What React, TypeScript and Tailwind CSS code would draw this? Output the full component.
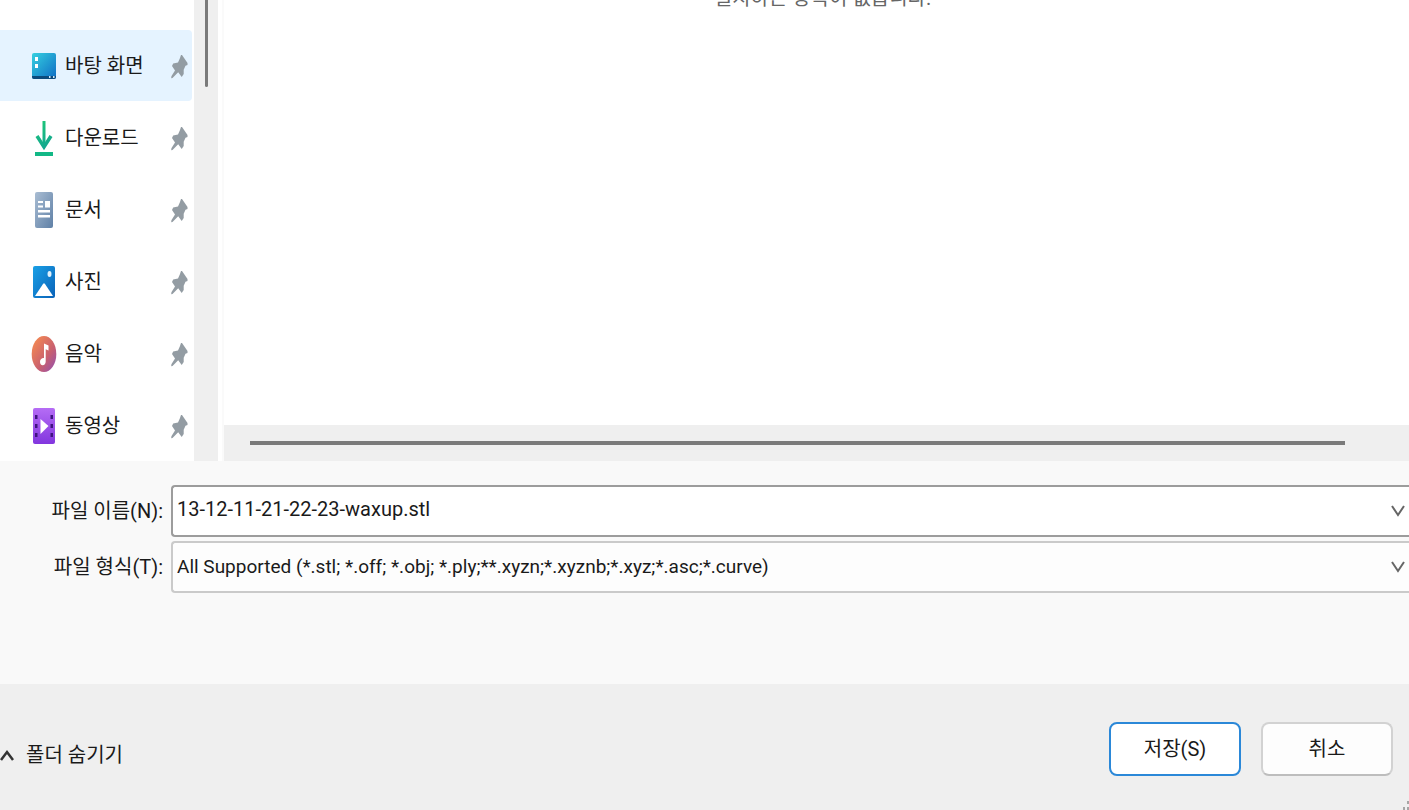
import { useState } from "react";
import type { ReactNode } from "react";

const DesktopIcon = () => (
  <svg width="26" height="36" viewBox="0 0 26 36" aria-hidden="true">
    <defs>
      <linearGradient id="desktop" x1="0" y1="0" x2="1" y2="1">
        <stop offset="0" stopColor="#35d0e0" />
        <stop offset="1" stopColor="#0f6cc4" />
      </linearGradient>
    </defs>
    <rect x="1" y="5" width="24" height="26" rx="2" fill="url(#desktop)" />
    <path d="M1 28h24v1a2 2 0 0 1-2 2H3a2 2 0 0 1-2-2z" fill="#0c4a7c" />
    <path d="M4 9h3v4H4zM4 16h3v4H4z" fill="#fff" />
    <path d="M18 28h1.500v2H18zM22 28h1.500v2H22z" fill="#cfe8fa" />
  </svg>
);

const DownloadIcon = () => (
  <svg width="26" height="36" viewBox="0 0 26 36" fill="none" aria-hidden="true">
    <defs>
      <linearGradient id="download" gradientUnits="userSpaceOnUse" x1="4" y1="2" x2="22" y2="34">
        <stop offset="0" stopColor="#1fc877" />
        <stop offset="1" stopColor="#0e9c98" />
      </linearGradient>
    </defs>
    <path d="M13 1v26" stroke="url(#download)" strokeWidth="3" />
    <path d="M6 16l7 11 7-11" stroke="url(#download)" strokeWidth="3.500" />
    <rect x="4" y="32" width="18" height="4" fill="#12b886" />
  </svg>
);

const DocumentIcon = () => (
  <svg width="26" height="36" viewBox="0 0 26 36" aria-hidden="true">
    <defs>
      <linearGradient id="document" x1="0" y1="0" x2="1" y2="1">
        <stop offset="0" stopColor="#a9bdd3" />
        <stop offset="1" stopColor="#5f80a6" />
      </linearGradient>
    </defs>
    <rect x="4" y="0" width="18" height="36" rx="2" fill="url(#document)" />
    <path d="M7 9h5v2H7zM7 13.500h5v2H7zM14 9h5v6.500h-5zM7 18h12v2.500H7zM7 23h12v2.500H7z" fill="#fff" />
  </svg>
);

const PictureIcon = () => (
  <svg width="26" height="36" viewBox="0 0 26 36" aria-hidden="true">
    <defs>
      <linearGradient id="picture" x1="0" y1="0" x2="1" y2="1">
        <stop offset="0" stopColor="#1aa0e6" />
        <stop offset="1" stopColor="#0a62b8" />
      </linearGradient>
    </defs>
    <rect x="2" y="2" width="22" height="32" rx="2" fill="url(#picture)" />
    <path d="M4 32l8-12q1-1.500 2 0l8 12z" fill="#fff" />
    <ellipse cx="18.500" cy="10" rx="2" ry="3" fill="#dff1fc" />
  </svg>
);

const MusicIcon = () => (
  <svg width="26" height="36" viewBox="0 0 26 36" aria-hidden="true">
    <defs>
      <linearGradient id="music" x1="0" y1="0" x2="1" y2="1">
        <stop offset="0.150" stopColor="#ef8455" />
        <stop offset="0.600" stopColor="#c9606f" />
        <stop offset="1" stopColor="#8f4fb5" />
      </linearGradient>
    </defs>
    <ellipse cx="13" cy="18" rx="12.300" ry="18" fill="url(#music)" />
    <path d="M13 7.500l4.500 2v5l-2.800-1.200v12.200c0 2.200-1.300 3.800-3 3.800s-2.700-1.400-2.700-3.500 1.500-4 4-3.800z" fill="#fff" />
  </svg>
);

const VideoIcon = () => (
  <svg width="26" height="36" viewBox="0 0 26 36" aria-hidden="true">
    <defs>
      <linearGradient id="video" x1="0" y1="0" x2="0" y2="1">
        <stop offset="0" stopColor="#b56cf5" />
        <stop offset="1" stopColor="#8236de" />
      </linearGradient>
    </defs>
    <rect x="2" y="0" width="22" height="36" rx="2" fill="url(#video)" />
    <path
      d="M4 7h2.500v4H4zM4 16h2.500v4H4zM4 25h2.500v4H4zM19.500 7H22v4h-2.500zM19.500 16H22v4h-2.500zM19.500 25H22v4h-2.500z"
      fill="#3f1480"
    />
    <path d="M9.500 11l8 7-8 8z" fill="#fff" />
  </svg>
);

const PinIcon = () => (
  <svg width="18" height="26" viewBox="0 0 18 26" aria-hidden="true">
    <path
      d="M11 2l1 0 5.500 8v2l-2 .7-1.800 4v4.300l-2 3-3.500-4.800L2.500 25 1.200 25.200l.2-2L5 17.500 2 13l1.200-2.500L8 9.500l1.800-4z"
      fill="#939ca3"
    />
  </svg>
);

const ChevronIcon = ({ up = false }: { up?: boolean }) => (
  <svg
    width="14"
    height="12"
    viewBox="0 0 14 12"
    fill="none"
    stroke={up ? "#333" : "#666"}
    strokeWidth={up ? 2.5 : 2}
    aria-hidden="true"
  >
    <path d={up ? "M1 11l6-8 6 8" : "M1 1l6 9 6-9"} />
  </svg>
);

const folders: { name: string; icon: ReactNode }[] = [
  { name: "바탕 화면", icon: <DesktopIcon /> },
  { name: "다운로드", icon: <DownloadIcon /> },
  { name: "문서", icon: <DocumentIcon /> },
  { name: "사진", icon: <PictureIcon /> },
  { name: "음악", icon: <MusicIcon /> },
  { name: "동영상", icon: <VideoIcon /> },
];

export default function App() {
  const [selected, setSelected] = useState("바탕 화면");
  const [fileName, setFileName] = useState("13-12-11-21-22-23-waxup.stl");

  return (
    <div className="flex min-h-screen flex-col overflow-hidden bg-[#f9f9f9] font-[Roboto,'Noto_Sans_CJK_KR',sans-serif] text-xl leading-7 text-[#1a1a1a]">
      <div className="flex bg-white">
        <nav className="flex w-48 shrink-0 flex-col gap-px pt-[30px]">
          {folders.map((folder) => (
            <button
              key={folder.name}
              type="button"
              onClick={() => setSelected(folder.name)}
              className={`flex h-[71px] items-center rounded-r-sm pr-1 pl-[31px] text-left ${
                selected === folder.name ? "bg-[#e5f3ff]" : "bg-white"
              }`}
            >
              {folder.icon}
              <span className="ml-2 flex-1">{folder.name}</span>
              <PinIcon />
            </button>
          ))}
        </nav>
        <div className="ml-0.5 flex w-6 shrink-0 justify-center bg-[#efefef]">
          <div className="h-[87px] w-[3px] rounded-b-sm bg-[#7a7a7a]" />
        </div>
        <div className="ml-1 w-0.5 shrink-0 bg-[#fafafa]" />
        <main className="flex min-w-0 flex-1 flex-col justify-between">
          <p className="-mt-4 pl-3 text-center text-[#666]">일치하는 항목이 없습니다.</p>
          <div className="flex h-9 items-center bg-[#efefef] pr-16 pl-[26px]">
            <div className="h-1 flex-1 bg-[#7a7a7a]" />
          </div>
        </main>
      </div>

      <form className="grid flex-1 grid-cols-[163px_1fr] content-start items-center gap-x-2 gap-y-1 pt-6">
        <label htmlFor="file-name" className="text-right">
          파일 이름(N):
        </label>
        <div className="flex h-[52px] items-center rounded-l-sm border-2 border-r-0 border-[#9c9c9c] bg-white pr-1">
          <input
            id="file-name"
            type="text"
            value={fileName}
            onChange={(e) => setFileName(e.target.value)}
            className="h-full min-w-0 flex-1 bg-transparent pb-1 pl-1 outline-none"
          />
          <ChevronIcon />
        </div>
        <label htmlFor="file-type" className="text-right">
          파일 형식(T):
        </label>
        <div className="flex h-[52px] items-center rounded-l-sm border-2 border-r-0 border-[#cacaca] bg-[#fdfdfd] pr-1">
          <select id="file-type" className="h-full min-w-0 flex-1 appearance-none bg-transparent pl-1 text-[19px] outline-none">
            <option>All Supported (*.stl; *.off; *.obj; *.ply;**.xyzn;*.xyznb;*.xyz;*.asc;*.curve)</option>
          </select>
          <ChevronIcon />
        </div>
      </form>

      <footer className="relative flex h-[126px] items-center justify-between bg-[#efefef] pt-1 pr-4">
        <button type="button" className="flex items-center gap-3 pt-3">
          <ChevronIcon up />
          폴더 숨기기
        </button>
        <div className="flex gap-5">
          <button type="button" className="h-[54px] w-[132px] rounded-lg border-2 border-[#2b88d8] bg-white">
            저장(S)
          </button>
          <button
            type="button"
            className="h-[54px] w-[132px] rounded-lg border-2 border-[#d2d2d2] border-b-[#bdbdbd] bg-[#fdfdfd]"
          >
            취소
          </button>
        </div>
        <svg className="absolute right-0 bottom-0" width="7" height="10" viewBox="0 0 7 10" aria-hidden="true">
          <path d="M5 1h2v3H5zM1 7h2v3H1zM5 7h2v3H5z" fill="#a6a6a6" />
        </svg>
      </footer>
    </div>
  );
}
